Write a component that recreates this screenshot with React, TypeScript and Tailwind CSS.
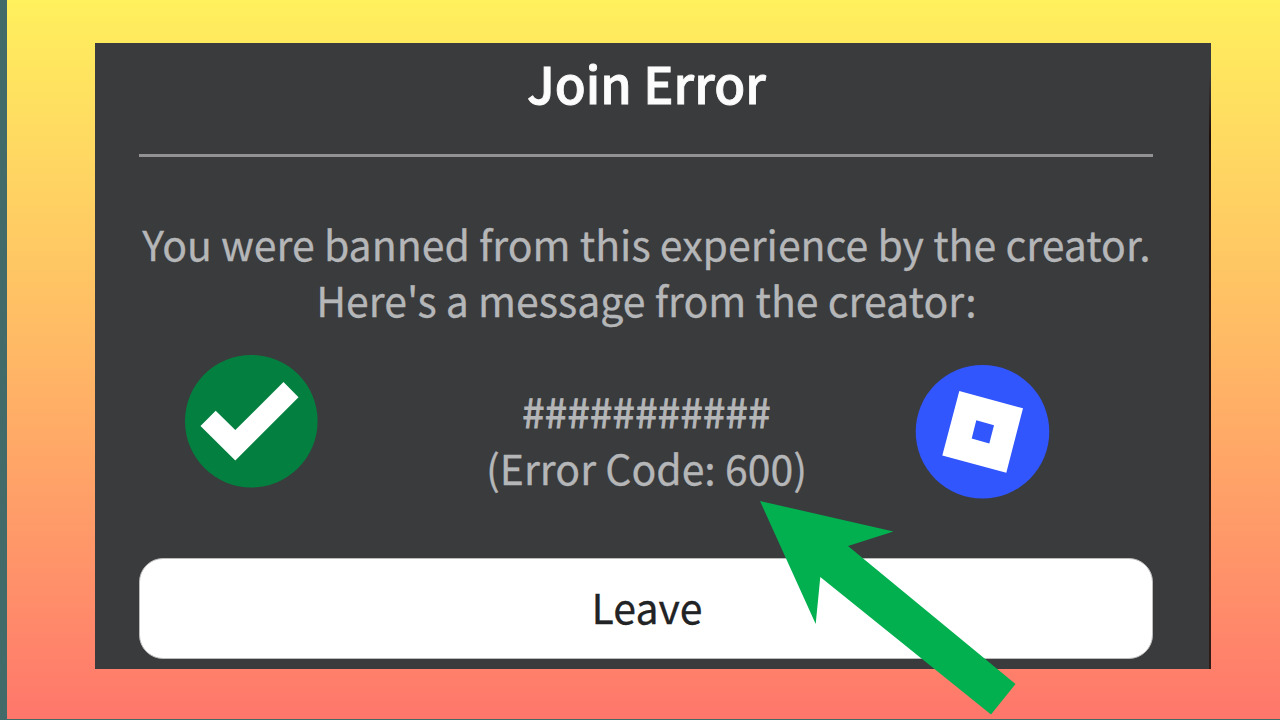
const message = [
  "You were banned from this experience by the creator.",
  "Here's a message from the creator:",
  "",
  "###########",
  "(Error Code: 600)"
];

function CheckBadge() {
  return (
    <svg className="absolute left-[185px] top-[354px] h-[134px] w-[133px]" viewBox="185 354 133 134">
      <circle cx="251.3" cy="421.2" r="66.3" fill="#03803f" />
      <path d="M200.5 426 L215.7 410.8 L235.3 430 L283.5 382 L298.5 397.2 L235.3 460.5 Z" fill="#fff" />
    </svg>
  );
}

function BlockBadge() {
  return (
    <svg className="absolute left-[915px] top-[364px] h-[135px] w-[135px]" viewBox="915 364 135 135">
      <circle cx="982.5" cy="431.7" r="66.8" fill="#3156fe" />
      <path
        fillRule="evenodd"
        fill="#fff"
        d="M959.3 391 L1023 408.3 L1006.3 472.7 L942.3 455.5 Z M976.3 420.3 L994 425.3 L989.3 443.5 L971.7 438.5 Z"
      />
    </svg>
  );
}

function Arrow() {
  return (
    <svg className="absolute left-[755px] top-[495px] h-[225px] w-[265px]" viewBox="755 495 265 225">
      <path d="M760 501 L893.5 531.5 L848 546 L1015.5 684 L991 714.5 L820.3 577 L815.7 624 Z" fill="#02b050" />
    </svg>
  );
}

export default function App() {
  return (
    <main className="relative flex h-[720px] w-[1280px] overflow-hidden bg-[#426a69] font-['Noto_Sans_CJK_JP','Noto_Sans_CJK_SC',sans-serif]">
      <div className="ml-[7px] h-[719px] flex-1 bg-linear-to-b from-[#fff05d] via-[#ffb765] to-[#ff766b] pl-[88px] pt-[43px]">
        <section className="flex h-[626px] w-[1116px] flex-col bg-[#3a3b3d] pl-11 pr-[58px]">
          <h1 className="mt-[2px] pl-px text-center text-[50.5px] font-medium leading-[74px] text-[#fcfcfc] [-webkit-text-stroke:0.9px_#fcfcfc]">
            Join Error
          </h1>
          <hr className="mt-[35px] h-[3px] border-0 bg-[#929294]" />
          <div className="mt-[58px] flex flex-col items-center whitespace-nowrap pl-px text-[41px] leading-[56px] text-[#b5b6b8] [-webkit-text-stroke:0.3px_#b5b6b8]">
            {message.map((line, i) => (
              <p key={i} className={line.startsWith("#") ? "h-14 text-[40px] tracking-[0.4px] [-webkit-text-stroke:0.9px_#b5b6b8]" : "h-14"}>
                {line}
              </p>
            ))}
          </div>
          <button className="mt-[63px] h-[101px] rounded-[24px] border border-[#bcbcbd] bg-white pb-[5px] pl-[2px] text-[41px] leading-[56px] text-[#222325] [-webkit-text-stroke:0.3px_#222325]">
            Leave
          </button>
        </section>
      </div>
      <div className="absolute left-[1209px] top-[75px] h-[594px] w-[2px] bg-linear-to-b from-transparent via-[#20100c] via-10% to-[#301b17]" />
      <CheckBadge />
      <BlockBadge />
      <Arrow />
    </main>
  );
}
